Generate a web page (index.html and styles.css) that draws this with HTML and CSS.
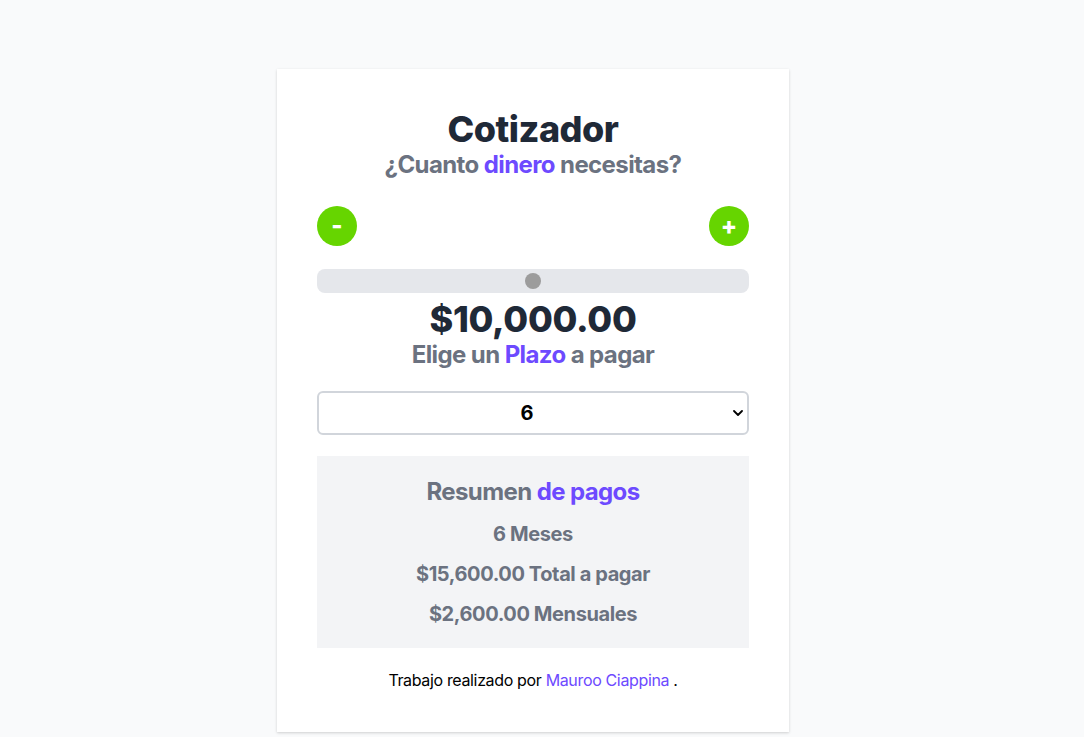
FILE: index.html
```html
<!DOCTYPE html>
<html lang="es">
<head>
<meta charset="utf-8">
<title>Cotizador</title>
<link rel="stylesheet" href="styles.css">
</head>
<body>
<main class="card">
  <h1 class="title">Cotizador</h1>
  <p class="subtitle">¿Cuanto <span class="accent">dinero</span> necesitas?</p>
  <div class="controls">
    <button class="round-btn">-</button>
    <button class="round-btn">+</button>
  </div>
  <div class="slider"><span class="thumb"></span></div>
  <p class="amount">$10,000.00</p>
  <p class="subtitle">Elige un <span class="accent">Plazo</span> a pagar</p>
  <div class="select">
    <span class="select-value">6</span>
    <svg class="chevron" viewBox="0 0 10 6" width="10" height="6"><path d="M1 1l4 4 4-4" fill="none" stroke="#000" stroke-width="1.8" stroke-linecap="round" stroke-linejoin="round"/></svg>
  </div>
  <section class="summary">
    <h2 class="summary-title">Resumen <span class="accent">de pagos</span></h2>
    <p class="summary-line">6 Meses</p>
    <p class="summary-line">$15,600.00 Total a pagar</p>
    <p class="summary-line">$2,600.00 Mensuales</p>
  </section>
  <p class="footer">Trabajo realizado por <a class="link" href="#">Mauroo Ciappina</a> .</p>
</main>
</body>
</html>
```

FILE: styles.css
```css
* { box-sizing: border-box; }
html, body { margin: 0; padding: 0; }
body {
  background: #f9fafb;
  font-family: Inter, "Noto Sans", sans-serif;
  min-height: 737px;
  padding-right: 18px;
}
.card {
  width: 512px;
  margin: 69px auto 0;
  background: #fff;
  padding: 40px;
  box-shadow: 0 1px 3px rgba(0,0,0,0.12), 0 1px 2px rgba(0,0,0,0.06);
  display: flex;
  flex-direction: column;
}
.title {
  margin: 0;
  font-size: 36px;
  line-height: 40px;
  font-weight: 800;
  color: #1f2937;
  text-align: center;
  letter-spacing: -0.5px;
}
.subtitle {
  margin: 0;
  font-size: 24px;
  line-height: 32px;
  font-weight: 700;
  color: #6b7280;
  text-align: center;
  letter-spacing: -0.6px;
}
.accent { color: #6d4aff; }
.controls {
  display: flex;
  justify-content: space-between;
  margin-top: 25px;
}
.round-btn {
  width: 40px;
  height: 40px;
  border-radius: 50%;
  border: none;
  background: #66d500;
  color: #fff;
  font-family: Inter, sans-serif;
  font-weight: 800;
  font-size: 24px;
  line-height: 40px;
  padding: 0;
  display: flex;
  align-items: center;
  justify-content: center;
}
.slider {
  margin-top: 23px;
  height: 24px;
  border-radius: 8px;
  background: #e5e7eb;
  display: flex;
  align-items: center;
  justify-content: center;
}
.thumb {
  width: 16px;
  height: 16px;
  border-radius: 50%;
  background: #9c9c9c;
}
.amount {
  margin: 6px 0 0;
  font-size: 36px;
  line-height: 40px;
  font-weight: 800;
  color: #1f2937;
  text-align: center;
  letter-spacing: -0.3px;
}
.select {
  margin-top: 20px;
  height: 44px;
  border: 2px solid #d1d5db;
  border-radius: 6px;
  display: flex;
  align-items: center;
  justify-content: center;
  padding-right: 12px;
  position: relative;
}
.select-value {
  font-size: 20px;
  font-weight: 700;
  color: #000;
}
.chevron {
  position: absolute;
  right: 4px;
  top: 17px;
}
.summary {
  margin-top: 21px;
  background: #f3f4f6;
  padding: 20px;
  display: flex;
  flex-direction: column;
  gap: 12px;
}
.summary-title {
  margin: 0;
  font-size: 24px;
  line-height: 32px;
  font-weight: 700;
  color: #6b7280;
  text-align: center;
  letter-spacing: -0.6px;
}
.summary-line {
  margin: 0;
  font-size: 20px;
  line-height: 28px;
  font-weight: 700;
  color: #6b7280;
  text-align: center;
  letter-spacing: -0.4px;
}
.footer {
  margin: 20px 0 0;
  font-size: 16px;
  line-height: 24px;
  color: #000;
  text-align: center;
  letter-spacing: -0.35px;
}
.link { color: #6d4aff; text-decoration: none; }
```
